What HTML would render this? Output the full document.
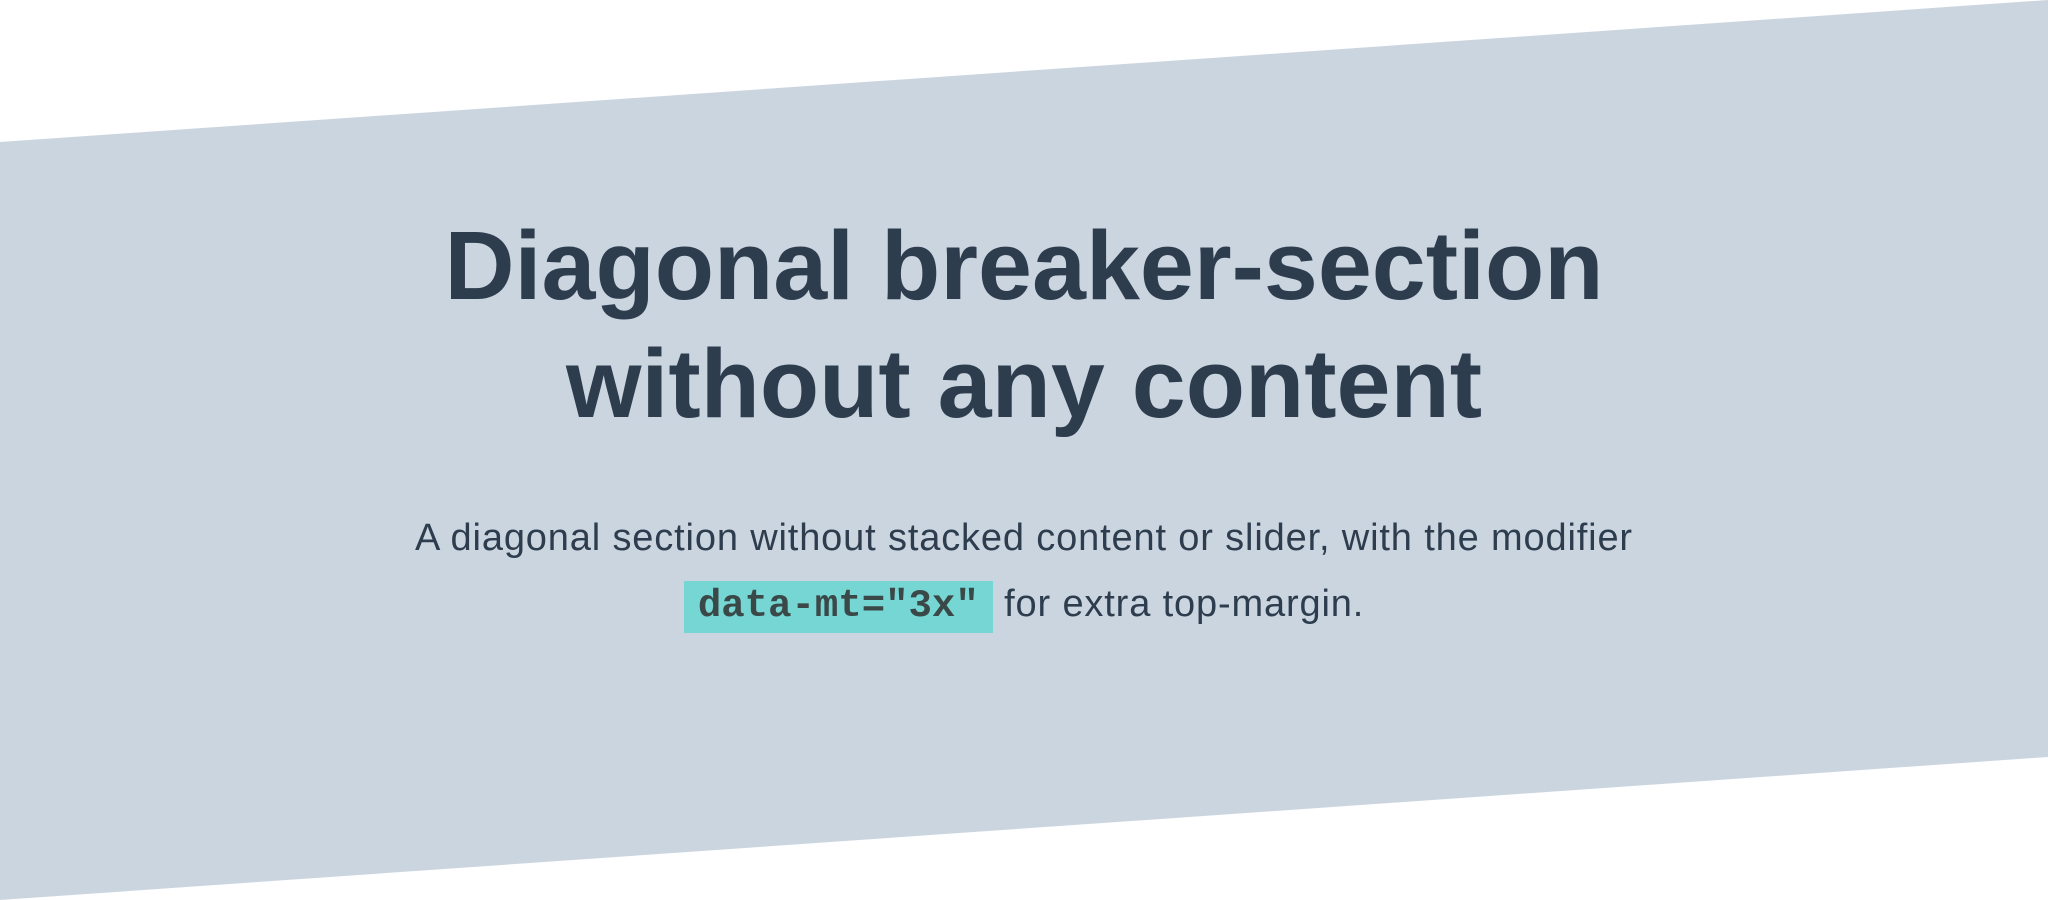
<!DOCTYPE html>
<html><head><meta charset="utf-8"><style>
html,body{margin:0;padding:0;width:2048px;height:900px;overflow:hidden;background:#fff;}
.bg{position:absolute;left:0;top:0;width:2048px;height:900px;}
.wrap{position:absolute;left:0;top:0;width:2048px;text-align:center;color:#2e3d4e;font-family:"Liberation Sans",sans-serif;}
h1{position:absolute;left:0;width:2048px;top:207px;margin:0;font-size:97px;line-height:118px;font-weight:700;}
p{position:absolute;left:0;width:2048px;top:505px;margin:0;font-size:38px;line-height:66px;letter-spacing:0.85px;white-space:nowrap;}
code{font-family:"Liberation Mono",monospace;font-weight:700;background:#76d6d3;color:#3a4848;padding:3px 14px 5px;font-size:39px;letter-spacing:0;}
</style></head><body>
<svg class="bg" viewBox="0 0 2048 900"><polygon points="0,142 2048,0 2048,757 0,900" fill="#cbd5e0"/></svg>
<div class="wrap">
<h1>Diagonal breaker-section<br>without any content</h1>
<p>A diagonal section without stacked content or slider, with the modifier<br><code>data-mt="3x"</code> for extra top-margin.</p>
</div>
</body></html>
